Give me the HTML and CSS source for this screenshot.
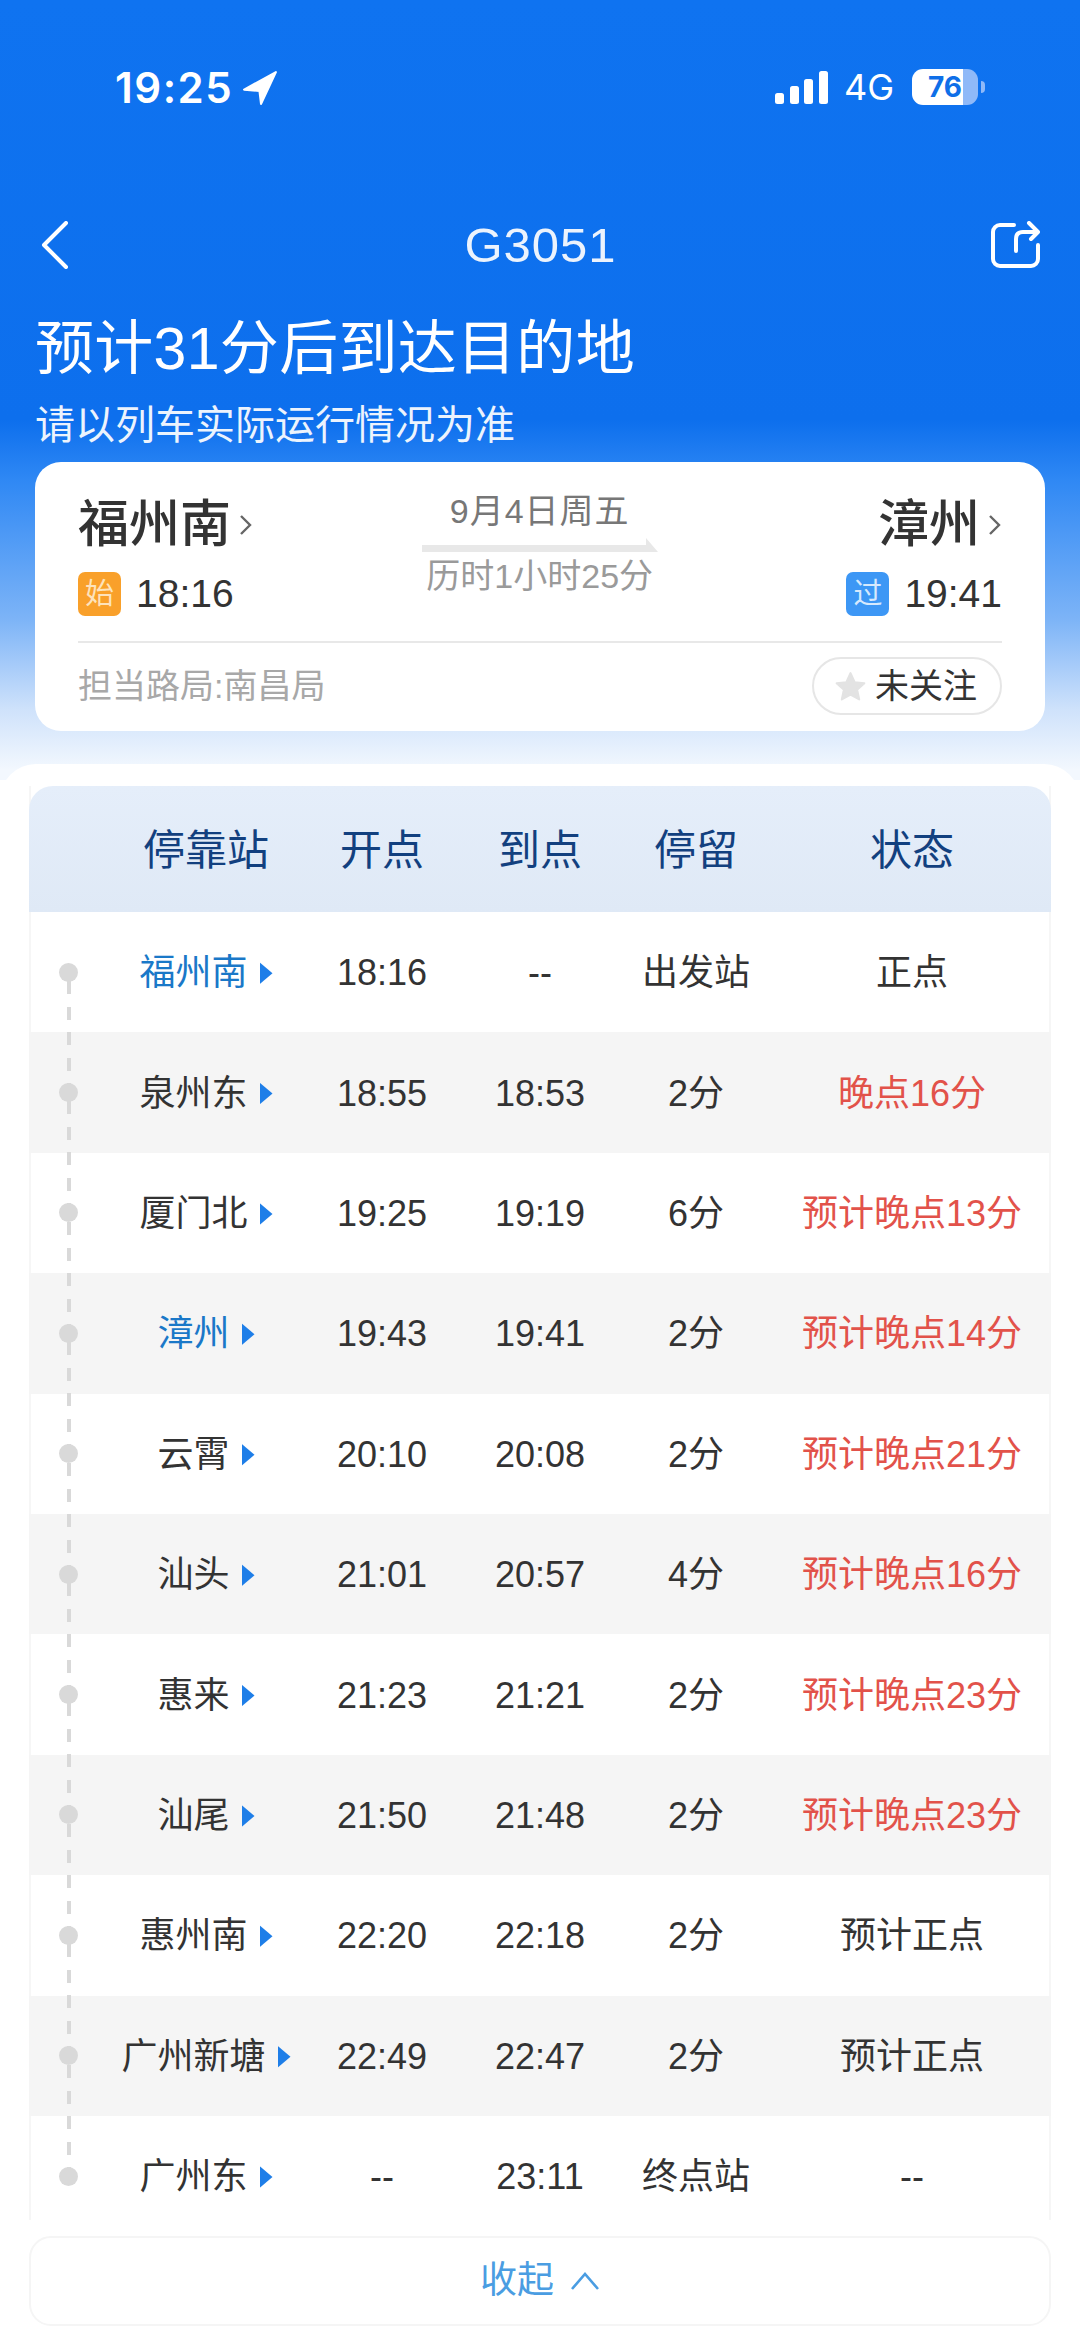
FILE: index.html
```html
<!DOCTYPE html>
<html lang="zh-CN">
<head>
<meta charset="utf-8">
<title>G3051</title>
<link rel="stylesheet" href="styles.css">
</head>
<body>
<div class="page">
  <header class="hero">
    <div class="status">
      <div class="status-left">
        <span class="clock">19:25</span>
        <svg class="loc" viewBox="0 0 34 34"><path d="M32 2 2 18.500l14.500 1.200L18 32z" fill="#fff" stroke="#fff" stroke-width="2" stroke-linejoin="round"/></svg>
      </div>
      <div class="status-right">
        <svg class="signal" viewBox="0 0 54 33"><rect x="0" y="22" width="9" height="11" rx="2.5"/><rect x="15" y="15" width="9" height="18" rx="2.5"/><rect x="29" y="8" width="9" height="25" rx="2.5"/><rect x="44" y="0" width="9" height="33" rx="2.5"/></svg>
        <span class="net">4G</span>
        <div class="battery"><span class="battery-num">76</span></div>
        <span class="nub"></span>
      </div>
    </div>
    <nav class="navbar">
      <svg class="back" viewBox="0 0 28 48"><path d="M25 2 3 24l22 22" fill="none" stroke="#fff" stroke-width="4" stroke-linecap="round" stroke-linejoin="round"/></svg>
      <span class="train">G3051</span>
      <svg class="share" viewBox="0 0 50 48"><path d="M24 4H10a7 7 0 0 0-7 7v27a7 7 0 0 0 7 7h31a7 7 0 0 0 7-7V24" fill="none" stroke="#fff" stroke-width="4" stroke-linecap="round"/><path d="M26 30V18q0-7 7-7h14M39 2l9 9-7 7" fill="none" stroke="#fff" stroke-width="4" stroke-linecap="round" stroke-linejoin="round"/></svg>
    </nav>
    <h1 class="eta">预计31分后到达目的地</h1>
    <p class="note">请以列车实际运行情况为准</p>
    <section class="trip">
      <div class="trip-main">
        <div class="end">
          <div class="city">福州南<svg class="chev" viewBox="0 0 14 24"><path d="M2 3l9 9-9 9" fill="none" stroke="#666" stroke-width="2.4"/></svg></div>
          <div class="when"><span class="tag tag-start">始</span><span class="clocktime">18:16</span></div>
        </div>
        <div class="mid">
          <div class="date">9月4日周五</div>
          <svg class="arrow" viewBox="0 0 236 14"><path d="M0 7h224V0l12 14H0z" fill="#e8e8e8"/></svg>
          <div class="span">历时1小时25分</div>
        </div>
        <div class="end end-right">
          <div class="city">漳州<svg class="chev" viewBox="0 0 14 24"><path d="M2 3l9 9-9 9" fill="none" stroke="#666" stroke-width="2.4"/></svg></div>
          <div class="when"><span class="tag tag-pass">过</span><span class="clocktime">19:41</span></div>
        </div>
      </div>
      <div class="trip-foot">
        <span class="bureau">担当路局:南昌局</span>
        <span class="follow"><svg class="star" viewBox="0 0 30 30"><path d="M15 2l4 8.800 9.400 1-7 6.400 2 9.300L15 22.800l-8.400 4.700 2-9.300-7-6.400 9.400-1z" fill="#e3e3e3" stroke="#e3e3e3" stroke-width="2" stroke-linejoin="round"/></svg>未关注</span>
      </div>
    </section>
  </header>

  <main class="panel">
    <div class="table">
      <div class="thead">
        <span></span><span>停靠站</span><span>开点</span><span>到点</span><span>停留</span><span>状态</span>
      </div>
      <div class="row"><span class="track"><i class="dot"></i></span><span class="stn now">福州南<i class="tri"></i></span><span>18:16</span><span>--</span><span>出发站</span><span>正点</span></div>
      <div class="row alt"><span class="track"><i class="dot"></i></span><span class="stn">泉州东<i class="tri"></i></span><span>18:55</span><span>18:53</span><span>2分</span><span class="late">晚点16分</span></div>
      <div class="row"><span class="track"><i class="dot"></i></span><span class="stn">厦门北<i class="tri"></i></span><span>19:25</span><span>19:19</span><span>6分</span><span class="late">预计晚点13分</span></div>
      <div class="row alt"><span class="track"><i class="dot"></i></span><span class="stn now">漳州<i class="tri"></i></span><span>19:43</span><span>19:41</span><span>2分</span><span class="late">预计晚点14分</span></div>
      <div class="row"><span class="track"><i class="dot"></i></span><span class="stn">云霄<i class="tri"></i></span><span>20:10</span><span>20:08</span><span>2分</span><span class="late">预计晚点21分</span></div>
      <div class="row alt"><span class="track"><i class="dot"></i></span><span class="stn">汕头<i class="tri"></i></span><span>21:01</span><span>20:57</span><span>4分</span><span class="late">预计晚点16分</span></div>
      <div class="row"><span class="track"><i class="dot"></i></span><span class="stn">惠来<i class="tri"></i></span><span>21:23</span><span>21:21</span><span>2分</span><span class="late">预计晚点23分</span></div>
      <div class="row alt"><span class="track"><i class="dot"></i></span><span class="stn">汕尾<i class="tri"></i></span><span>21:50</span><span>21:48</span><span>2分</span><span class="late">预计晚点23分</span></div>
      <div class="row"><span class="track"><i class="dot"></i></span><span class="stn">惠州南<i class="tri"></i></span><span>22:20</span><span>22:18</span><span>2分</span><span>预计正点</span></div>
      <div class="row alt"><span class="track"><i class="dot"></i></span><span class="stn">广州新塘<i class="tri"></i></span><span>22:49</span><span>22:47</span><span>2分</span><span>预计正点</span></div>
      <div class="row last"><span class="track"><i class="dot"></i></span><span class="stn">广州东<i class="tri"></i></span><span>--</span><span>23:11</span><span>终点站</span><span>--</span></div>
    </div>
    <div class="collapse-wrap">
      <div class="collapse">收起<svg class="up" viewBox="0 0 30 20"><path d="M2 18 15 3l13 15" fill="none" stroke="#4a9de2" stroke-width="2.600"/></svg></div>
    </div>
  </main>
</div>
</body>
</html>
```
FILE: styles.css
```css
* { box-sizing: border-box; }
html, body { margin: 0; padding: 0; background: #fff; }
body { font-family: "Liberation Sans", "Noto Sans CJK SC", sans-serif; color: #333; }
.page { width: 1080px; height: 2348px; overflow: hidden; background: #fff; }

.hero {
  height: 780px;
  padding: 0 35px;
  color: #fff;
  background: linear-gradient(180deg, #0f73f0 0, #0d6fed 420px, #2f88f4 480px, #7db4f7 620px, #cfe2fb 710px, #f3f8fe 770px);
}
.status { height: 180px; display: flex; justify-content: space-between; align-items: flex-start; padding: 70px 60px 0 80px; }
.status-left { display: flex; align-items: center; gap: 9px; height: 36px; }
.clock { font-family: Inter, sans-serif; font-weight: 600; font-size: 42px; line-height: 36px; letter-spacing: 1.500px; }
.loc { width: 36px; height: 36px; }
.status-right { display: flex; align-items: center; height: 36px; margin-top: -1px; }
.signal { width: 54px; height: 33px; fill: #fff; }
.net { font-family: Inter, sans-serif; font-size: 36px; font-weight: 400; line-height: 36px; margin-left: 15px; width: 53px; }
.battery { width: 66px; height: 36px; margin-left: 15px; border-radius: 11px; color: #0f6fe8; background: linear-gradient(90deg, #fff 77%, #8fb9f8 77%); text-align: center; }
.battery-num { display: block; font-family: Inter, sans-serif; font-weight: 700; font-size: 28px; line-height: 36px; }
.nub { width: 4px; height: 12px; margin-left: 3px; background: #8fb9f8; border-radius: 0 4px 4px 0; }

.navbar { display: grid; grid-template-columns: 1fr auto 1fr; align-items: center; height: 56px; margin-top: 37px; padding: 0 5px 0 6px; }
.back { width: 28px; height: 48px; }
.train { font-size: 49px; line-height: 56px; letter-spacing: 1px; opacity: .92; }
.share { width: 50px; height: 48px; justify-self: end; }

.eta { margin: 41px 0 0; font-size: 59px; line-height: 70px; font-weight: 400; letter-spacing: .3px; }
.note { margin: 16px 0 0; font-size: 40px; line-height: 50px; opacity: .92; }

.trip { height: 269px; margin-top: 12px; padding: 0 43px; background: #fff; border-radius: 26px; color: #333; }
.trip-main { display: flex; justify-content: space-between; height: 181px; border-bottom: 2px solid #e8e8e8; }
.end { padding-top: 33px; }
.end-right { display: flex; flex-direction: column; align-items: flex-end; }
.city { display: flex; align-items: center; font-size: 51px; line-height: 60px; font-weight: 500; }
.chev { width: 14px; height: 24px; margin-left: 8px; }
.when { display: flex; align-items: center; margin-top: 17px; height: 44px; }
.tag { width: 43px; height: 44px; border-radius: 7px; text-align: center; color: #fff; font-size: 29px; line-height: 44px; }
.tag-start { background: #f9a02a; color: #fde3bc; }
.tag-pass { background: #3d97f5; color: #d6e9fd; }
.clocktime { margin-left: 15px; font-size: 39px; line-height: 44px; }
.mid { width: 236px; display: flex; flex-direction: column; align-items: center; padding-top: 29px; color: #777; font-size: 34px; line-height: 40px; margin-right: 20px; }
.arrow { width: 236px; height: 14px; margin-top: 7px; flex: none; }
.date, .span { white-space: nowrap; }
.date { letter-spacing: 1px; }
.span { margin-top: 4px; color: #9a9a9a; }
.trip-foot { display: flex; justify-content: space-between; align-items: center; height: 86px; }
.bureau { font-size: 34px; line-height: 40px; color: #a8a8a8; }
.follow { display: flex; align-items: center; height: 58px; width: 190px; padding-left: 21px; gap: 9px; border: 2px solid #e6e6e6; border-radius: 29px; font-size: 34px; line-height: 40px; color: #333; }
.star { width: 31px; height: 31px; }

.panel { height: 1584px; margin-top: -16px; padding: 22px 29px 0; background: #fff; border-radius: 36px 36px 0 0; position: relative; }
.table { border-left: 2px solid #f6f6f6; border-right: 2px solid #f6f6f6; }
.thead, .row { display: grid; grid-template-columns: 85px 180px 172px 144px 168px 264px; align-items: center; justify-items: center; text-align: center; }
.thead { height: 126px; margin: 0 -2px; padding: 4px 0 0 2px; background: linear-gradient(180deg, #e5eefa, #dfe9f6); color: #12407f; font-size: 42px; line-height: 50px; border-radius: 24px 24px 0 0; }
.row { height: 120.4px; padding-top: 2px; font-size: 36px; line-height: 44px; color: #333; position: relative; }
.alt { background: #f5f5f5; margin: 0 -2px; padding-left: 2px; }
.stn { display: flex; align-items: center; gap: 12px; white-space: nowrap; }
.now { color: #1a78c8; }
.tri { display: block; width: 13px; height: 22px; background: #1e7ee8; clip-path: polygon(0 0, 100% 50%, 0 100%); }
.late { color: #e2524a; }
.track { justify-self: stretch; align-self: stretch; position: relative; }
.dot { position: absolute; left: 28px; top: 50%; width: 19px; height: 19px; margin-top: -10.500px; border-radius: 50%; background: #d9d9d9; }
.track::after { content: ""; position: absolute; left: 35.500px; top: 67px; width: 4px; height: 112px; background: repeating-linear-gradient(180deg, #d9d9d9 0, #d9d9d9 13px, transparent 13px, transparent 25.600px); z-index: 1; }
.last .track::after { display: none; }

.collapse-wrap { margin-top: -16px; padding-top: 16px; background: #fff; position: relative; z-index: 2; }
.collapse {
  display: flex; align-items: center; justify-content: center; gap: 16px;
  height: 90px;
  border: 2px solid #f5f5f5;
  border-radius: 22px;
  color: #4a9de2; font-size: 37px; line-height: 44px;
}
.up { width: 30px; height: 20px; }
```
